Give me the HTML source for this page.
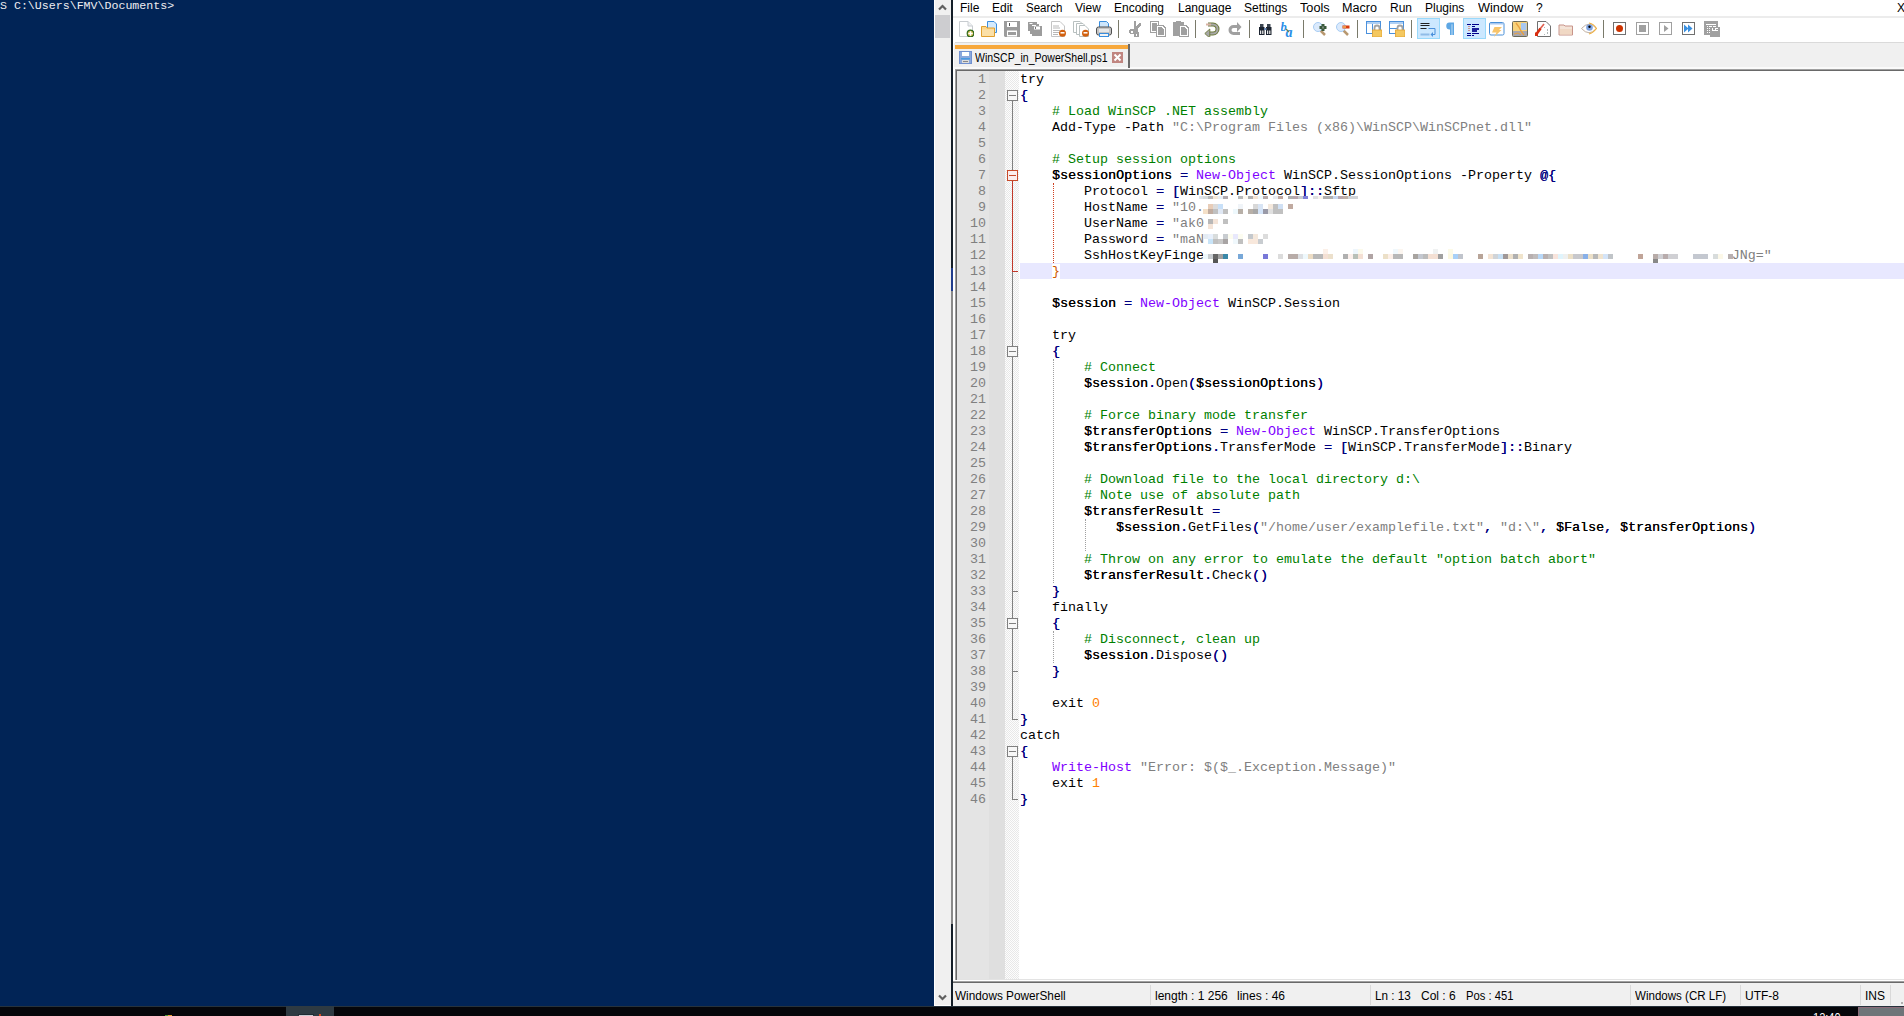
<!DOCTYPE html>
<html><head><meta charset="utf-8">
<style>
html,body{margin:0;padding:0;width:1904px;height:1016px;overflow:hidden;background:#012456;position:relative;font-family:"Liberation Sans",sans-serif}
.a{position:absolute}
#ps{position:absolute;left:0px;top:-1.5px;font-family:"Liberation Mono",monospace;font-size:11.62px;line-height:14px;color:#eeedf0;white-space:pre}
#pssb{position:absolute;left:934px;top:0;width:17px;height:1006px;background:#f0f0f0}
#npp{position:absolute;left:951px;top:0;width:953px;height:1006px;background:#fff}
.menu{position:absolute;top:1px;font-size:12px;color:#000;white-space:pre;line-height:15px}
#editor{position:absolute;left:955px;top:69px;width:949px;height:913px;background:#fff}
#code{position:absolute;left:1020px;top:72px;margin:0;font-family:"Liberation Mono",monospace;font-size:13.333px;line-height:16px;color:#000;white-space:pre}
#code b{font-weight:normal;text-shadow:0.35px 0 0 currentColor}
#code .v{color:#000}
#code .o{color:#000080;font-weight:normal}
#code .kb{color:#8000ff}
#code i{font-style:normal}
#code .c{color:#008000}
#code .s{color:#808080}
#code .k{color:#8000ff}
#code .n{color:#ff8000}
#code .bh{color:#d05a00;background:#fff}
#lineno{position:absolute;left:957px;top:72px;width:29px;margin:0;text-align:right;font-family:"Liberation Mono",monospace;font-size:13.333px;line-height:16px;color:#808080;white-space:pre}
.ig{position:absolute;width:0;border-left:1px dotted #a0a0a0}
.status{position:absolute;top:989px;font-size:12px;line-height:15px;color:#000;white-space:pre}
.ssep{position:absolute;top:985px;width:1px;height:20px;background:#d9d9d9}
.tb{position:absolute;top:21px;width:16px;height:16px}
.tsep{position:absolute;top:20px;width:1px;height:18px;background:#7a7a6a}
</style></head><body>
<div id="ps">S C:\Users\FMV\Documents&gt;</div>

<!-- powershell scrollbar -->
<div id="pssb">
  <div class="a" style="left:0;top:0;width:1px;height:1006px;background:#fff"></div><div class="a" style="left:0;top:1005px;width:17px;height:1px;background:#fff"></div><div class="a" style="left:1px;top:15px;width:15px;height:23px;background:#cdcdd0"></div>
  <svg class="a" style="left:4px;top:3px" width="9" height="8"><path d="M1 6.5 L4.5 3 L8 6.5" fill="none" stroke="#606060" stroke-width="2.2"/></svg>
  <svg class="a" style="left:4px;top:994px" width="9" height="8"><path d="M1 1.5 L4.5 5 L8 1.5" fill="none" stroke="#606060" stroke-width="2.2"/></svg>
</div>

<!-- notepad++ -->
<div id="npp">
  <div class="a" style="left:0;top:0;width:2px;height:1006px;background:linear-gradient(#141e28 0,#141e28 268px,#203c8c 268px,#203c8c 291px,#8a8a8a 291px,#8a8a8a 924px,#141e28 924px)"></div>
  <!-- menubar line -->
  <div class="a" style="left:2px;top:16px;width:951px;height:2px;background:#ececec"></div>
  <!-- toolbar/tabbar line -->
  <div class="a" style="left:4px;top:42px;width:949px;height:1px;background:#dadada"></div>
  <!-- tab bar bg -->
  <div class="a" style="left:3px;top:43px;width:950px;height:24px;background:#f0f0f0"></div>
  <div class="a" style="left:3px;top:67px;width:950px;height:2px;background:#fafafa"></div>
</div>

<svg class="a" style="left:958px;top:21px" width="16" height="16" viewBox="0 0 16 16"><path d="M1.5 0.5H10L14.5 5V15.5H1.5Z" fill="#fff" stroke="#c8ccd0"/><path d="M10 0.5V5H14.5" fill="#eef0f2" stroke="#c8ccd0"/><circle cx="12.5" cy="12.5" r="3.3" fill="#c8b040" stroke="#2e6a1e" stroke-width="1.2"/><path d="M12.5 10.3V14.7M10.3 12.5H14.7" stroke="#fff" stroke-width="1.5"/></svg>
<svg class="a" style="left:981px;top:21px" width="16" height="16" viewBox="0 0 16 16"><path d="M6.5 0.5H13L15.5 3V11.5H6.5Z" fill="#d4eafd" stroke="#3c8ede"/><path d="M0.5 5.5H5L6 7H13.5V15.5H0.5Z" fill="#fcd68a" stroke="#e0a030"/><rect x="1" y="8.5" width="12" height="6.5" fill="#fbe0a8"/></svg>
<svg class="a" style="left:1004px;top:21px" width="16" height="16" viewBox="0 0 16 16"><path d="M0 0H16V16H1L0 15Z" fill="#9c9c9c"/><rect x="3" y="1" width="10" height="5" fill="#fff"/><rect x="5" y="2" width="1" height="3" fill="#555"/><rect x="3" y="9.5" width="10" height="6" fill="#fff"/><rect x="4" y="11" width="8" height="3" fill="#9c9c9c"/></svg>
<svg class="a" style="left:1027px;top:21px" width="16" height="16" viewBox="0 0 16 16"><rect x="1" y="1" width="9" height="9" fill="#9c9c9c"/><rect x="3" y="3" width="9" height="10" fill="#9c9c9c"/><rect x="2.5" y="2" width="3" height="1" fill="#fff"/><rect x="5" y="4" width="4" height="1" fill="#fff"/><rect x="5" y="5" width="10" height="10" fill="#9c9c9c"/><rect x="7" y="5.5" width="6" height="3" fill="#fff"/><rect x="8" y="6" width="1" height="2" fill="#777"/></svg>
<svg class="a" style="left:1050px;top:21px" width="16" height="16" viewBox="0 0 16 16"><path d="M1.5 0.5H10L14.5 5V15.5H1.5Z" fill="#fff" stroke="#c4c4c4"/><path d="M3 5H9M3 7H10M3 9.5H10M3 11.5H9M3 13.5H8" stroke="#b8b8b8"/><circle cx="12.5" cy="12.3" r="3.5" fill="#d2600e"/><path d="M10.5 11.8H14.5" stroke="#fff" stroke-width="1.5"/></svg>
<svg class="a" style="left:1073px;top:21px" width="16" height="16" viewBox="0 0 16 16"><path d="M0.5 0.5H7L8.5 2V11.5H0.5Z" fill="#fff" stroke="#b8c0c0"/><path d="M3.5 2.5H10L11.5 4V13.5H3.5Z" fill="#fff" stroke="#b8c0c0"/><path d="M6.5 4.5H12L15.5 8V15.5H6.5Z" fill="#fff" stroke="#b8c0c0"/><circle cx="12.5" cy="12.3" r="3.5" fill="#d2600e"/><path d="M10.5 11.8H14.5" stroke="#fff" stroke-width="1.5"/></svg>
<svg class="a" style="left:1096px;top:21px" width="16" height="16" viewBox="0 0 16 16"><path d="M3.5 0.5H10.5L12.5 2.5V7H3.5Z" fill="#cde6fc" stroke="#3a8ede"/><rect x="0.5" y="6" width="15" height="8" rx="2" fill="#c4c4c4" stroke="#505050"/><rect x="3" y="8" width="10" height="3" fill="#e8e8e8"/><rect x="3.5" y="12.5" width="9" height="3" fill="#f4f4f4" stroke="#3a8ede"/></svg>
<svg class="a" style="left:1127px;top:21px" width="16" height="16" viewBox="0 0 16 16"><g shape-rendering="crispEdges"><rect x="7" y="0" width="2" height="10" fill="#a0a0a0"/><path d="M12 2H14V4L10 9H8V7Z" fill="#a0a0a0"/><rect x="3" y="8" width="8" height="5" fill="#a0a0a0"/><rect x="2" y="9" width="2" height="3" fill="#a0a0a0"/><rect x="4" y="10" width="2" height="2" fill="#fff"/><rect x="7" y="11" width="5" height="5" fill="#a0a0a0"/><rect x="9" y="13" width="1" height="2" fill="#fff"/></g></svg>
<svg class="a" style="left:1150px;top:21px" width="16" height="16" viewBox="0 0 16 16"><g shape-rendering="crispEdges"><rect x="0" y="0" width="9" height="12" fill="#a0a0a0"/><rect x="1" y="1" width="7" height="10" fill="#fff"/><path d="M2 2H6L7 3V10H2Z" fill="#a0a0a0"/><path d="M6 4H13L16 7V16H6Z" fill="#a0a0a0"/><path d="M7 5H12L15 8V15H7Z" fill="#fff"/><path d="M8 6H11L14 9V14H8Z" fill="#a0a0a0"/></g></svg>
<svg class="a" style="left:1173px;top:21px" width="16" height="16" viewBox="0 0 16 16"><g shape-rendering="crispEdges"><rect x="0" y="1" width="11" height="14" fill="#a0a0a0"/><rect x="3" y="0" width="5" height="2" fill="#a0a0a0"/><path d="M6 4H13L16 7V16H6Z" fill="#a0a0a0"/><path d="M7 5H12L15 8V15H7Z" fill="#fff"/><path d="M8 6H11L14 9V14H8Z" fill="#a0a0a0"/></g></svg>
<svg class="a" style="left:1204px;top:21px" width="16" height="16" viewBox="0 0 16 16"><path d="M4 3.5H9A4.5 4.5 0 0 1 9 12.5H5" fill="none" stroke="#6d7a3c" stroke-width="4"/><path d="M4 3.5H9A4.5 4.5 0 0 1 9 12.5H5" fill="none" stroke="#a8a8a8" stroke-width="2"/><path d="M0.8 12.5L5.8 8V17Z" fill="#a8a8a8" stroke="#6d7a3c" stroke-width="0.9"/><rect x="2" y="2.5" width="5" height="2" fill="#d8b4a4"/></svg>
<svg class="a" style="left:1227px;top:21px" width="16" height="16" viewBox="0 0 16 16"><path d="M14.5 6L10 1V4H6.5A5 5 0 0 0 6.5 14H13V11H6.5A2 2 0 0 1 6.5 7H10V11Z" fill="#a0a0a0"/></svg>
<svg class="a" style="left:1258px;top:21px" width="16" height="16" viewBox="0 0 16 16"><path d="M1 6H6.5V14H1Z M8 6H13.5V14H8Z" fill="#1c2430"/><path d="M2 3H5.5V6H2Z M9 3H12.5V6H9Z" fill="#3a4450"/><rect x="6" y="7" width="2.5" height="2" fill="#6a8ab8"/><rect x="2" y="9.5" width="1.2" height="3.5" fill="#e8e8e8"/><rect x="4" y="9.5" width="1.5" height="3.5" fill="#c8c8c8"/><rect x="9" y="9.5" width="1.2" height="3.5" fill="#e8e8e8"/><rect x="11" y="9.5" width="1.5" height="3.5" fill="#c8c8c8"/></svg>
<svg class="a" style="left:1281px;top:21px" width="16" height="16" viewBox="0 0 16 16"><text x="-0.5" y="9.5" font-family="Liberation Serif" font-style="italic" font-weight="bold" font-size="12.5" fill="#2a8ee8">b</text><text x="4.5" y="15.5" font-family="Liberation Serif" font-style="italic" font-weight="bold" font-size="14" fill="#2a8ee8">a</text><path d="M5 8L8 11" stroke="#6a8050" stroke-width="1.2"/></svg>
<svg class="a" style="left:1312px;top:21px" width="16" height="16" viewBox="0 0 16 16"><path d="M8.5 9.5L13 14" stroke="#b89870" stroke-width="2.5"/><circle cx="6" cy="6" r="4.5" fill="#dbeafc" stroke="#a8cdf4"/><path d="M9.5 3H12.5V5H14.5V8H12.5V10H9.5V8H7.5V5H9.5Z" fill="#3a5a3a"/><rect x="10.3" y="5.5" width="1.4" height="2" fill="#9a9a9a"/></svg>
<svg class="a" style="left:1335px;top:21px" width="16" height="16" viewBox="0 0 16 16"><path d="M8.5 9.5L13 14" stroke="#b89870" stroke-width="2.5"/><circle cx="6" cy="6" r="4.5" fill="#dbeafc" stroke="#a8cdf4"/><rect x="7.5" y="4.5" width="7" height="3" fill="#d83a10"/><rect x="8" y="5.3" width="3" height="1.4" fill="#f8c060"/></svg>
<svg class="a" style="left:1366px;top:21px" width="16" height="16" viewBox="0 0 16 16"><rect x="0.5" y="0.5" width="14" height="12" fill="#fff" stroke="#4a90dc"/><rect x="1" y="1" width="13" height="2" fill="#b0d0f4"/><path d="M6.5 3V12.5" stroke="#4a90dc"/><path d="M8.5 9V7A2.5 2.5 0 0 1 13.5 7V9" fill="none" stroke="#a4a4a4" stroke-width="1.8"/><rect x="6.5" y="9" width="9.5" height="7" fill="#f4c860" stroke="#e0a030" stroke-width="0.8"/></svg>
<svg class="a" style="left:1389px;top:21px" width="16" height="16" viewBox="0 0 16 16"><rect x="0.5" y="0.5" width="14" height="12" fill="#fff" stroke="#4a90dc"/><rect x="1" y="1" width="13" height="2" fill="#b0d0f4"/><path d="M1 7.5H8" stroke="#4a90dc"/><path d="M8.5 9V7A2.5 2.5 0 0 1 13.5 7V9" fill="none" stroke="#a4a4a4" stroke-width="1.8"/><rect x="6.5" y="9" width="9.5" height="7" fill="#f4c860" stroke="#e0a030" stroke-width="0.8"/></svg>
<div class="a" style="left:1417px;top:18px;width:21px;height:19px;border:1px solid #99d9fb;background:#cce8ff"></div>
<svg class="a" style="left:1420px;top:21px" width="16" height="16" viewBox="0 0 16 16"><rect x="0.5" y="2" width="9" height="1" fill="#222"/><rect x="0.5" y="4" width="9" height="1" fill="#222"/><rect x="0.5" y="7" width="6" height="1" fill="#222"/><path d="M8.5 7.5H15V13.5H12" fill="none" stroke="#4a90dc" stroke-width="1"/><path d="M13 11L10.5 13.5L13 16Z" fill="#4a90dc"/><rect x="0.5" y="12.5" width="9" height="2" fill="#90bce8"/></svg>
<svg class="a" style="left:1443px;top:21px" width="16" height="16" viewBox="0 0 16 16"><path d="M6.5 1.5H11V14H9.3V3.2H8.7V14H7V8.5A3.5 3.5 0 0 1 6.5 1.5Z" fill="#5ea7e4"/></svg>
<div class="a" style="left:1463px;top:18px;width:21px;height:19px;border:1px solid #99d9fb;background:#cce8ff"></div>
<svg class="a" style="left:1466px;top:21px" width="16" height="16" viewBox="0 0 16 16"><path d="M1 3.5H5M6 3.5H13M6 5.5H9M6 8H13M6 10H11M1 12.5H5M6 12.5H13M1 14.5H5M6 14.5H8M6.5 16.5H7.5" stroke="#00008a" stroke-width="1"/><rect x="6" y="7.3" width="7" height="1.4" fill="#00008a"/><rect x="6" y="9.3" width="5" height="1.4" fill="#00008a"/><path d="M3 5V11" stroke="#d04020" stroke-dasharray="1 1"/></svg>
<svg class="a" style="left:1489px;top:21px" width="16" height="16" viewBox="0 0 16 16"><rect x="0.5" y="1.5" width="14.5" height="12.5" rx="1.5" fill="#fff" stroke="#4a90d8"/><rect x="1" y="2" width="13.5" height="1.5" fill="#a8c8f0"/><path d="M5.5 6H13L10 9H12.5L5 16L7.5 11.5H3Z" fill="#f8c46a"/></svg>
<svg class="a" style="left:1512px;top:21px" width="16" height="16" viewBox="0 0 16 16"><rect x="0.5" y="0.5" width="15" height="15" rx="1" fill="#f8d27a" stroke="#6a6a5a"/><rect x="9" y="2" width="5.5" height="7" fill="#a8c8f0"/><rect x="1" y="10" width="14" height="5" fill="#a8a8b0"/><path d="M4 2L7 6L9 10L12 14" stroke="#e8a040" stroke-width="1.4" fill="none"/><path d="M2 13L6 12L9 14" stroke="#e8a040" stroke-width="1" fill="none"/></svg>
<svg class="a" style="left:1535px;top:21px" width="16" height="16" viewBox="0 0 16 16"><path d="M2.5 0.5H11L15.5 5V15.5H2.5Z" fill="#fff" stroke="#707070"/><path d="M9 3L5 8" stroke="#e06050" stroke-width="1.6"/><path d="M5.5 7.5L1.5 13" stroke="#d82e10" stroke-width="2.6"/><rect x="0" y="11.5" width="3" height="3.5" fill="#d82e10"/><rect x="9" y="6" width="1" height="1" fill="#b0b8b8"/><rect x="12" y="8" width="1" height="2" fill="#b0b8b8"/><rect x="12" y="11" width="1" height="2" fill="#b0b8b8"/><rect x="9" y="13" width="1" height="1" fill="#b0b8b8"/></svg>
<svg class="a" style="left:1558px;top:21px" width="16" height="16" viewBox="0 0 16 16"><path d="M1 4H6L7 5H14.5V14H1Z" fill="#f4e4d8" stroke="#c8948a"/><rect x="2" y="8" width="12" height="5.5" fill="#f0d8c4"/></svg>
<svg class="a" style="left:1581px;top:21px" width="16" height="16" viewBox="0 0 16 16"><path d="M0.5 7.5Q8 -1 15.5 7.5Q8 16 0.5 7.5Z" fill="#fff" stroke="#c0b0a0" stroke-width="1"/><path d="M8 2Q13 3 15.5 7.5Q12 12 8 13" fill="none" stroke="#f0b040" stroke-width="1.2"/><circle cx="8.5" cy="6.5" r="3.3" fill="#80a4e0"/><circle cx="8.5" cy="5.8" r="1.2" fill="#000"/></svg>
<svg class="a" style="left:1612px;top:21px" width="16" height="16" viewBox="0 0 16 16"><rect x="1.5" y="1.5" width="12" height="12" fill="#fff" stroke="#707070" stroke-width="1"/><circle cx="7.5" cy="7.5" r="3.5" fill="#cc3300"/></svg>
<svg class="a" style="left:1635px;top:21px" width="16" height="16" viewBox="0 0 16 16"><rect x="1.5" y="1.5" width="12" height="12" fill="#fff" stroke="#a0a0a0"/><rect x="4" y="4" width="7" height="7" fill="#a0a0a0"/></svg>
<svg class="a" style="left:1658px;top:21px" width="16" height="16" viewBox="0 0 16 16"><rect x="1.5" y="1.5" width="12" height="12" fill="#fff" stroke="#a0a0a0"/><path d="M6 4L10.5 7.5L6 11Z" fill="#a0a0a0"/></svg>
<svg class="a" style="left:1681px;top:21px" width="16" height="16" viewBox="0 0 16 16"><rect x="1.5" y="1.5" width="12" height="12" fill="#fff" stroke="#707070"/><path d="M3 3.5L7.5 7.5L3 11.5Z M7 3.5L11.5 7.5L7 11.5Z" fill="#3a90e0"/></svg>
<svg class="a" style="left:1704px;top:21px" width="16" height="16" viewBox="0 0 16 16"><g shape-rendering="crispEdges" fill="#fff"><rect x="0" y="0" width="14" height="14" fill="#a0a0a0"/><rect x="6" y="6" width="10" height="10" fill="#a0a0a0"/><rect x="2" y="3" width="10" height="1"/><rect x="3" y="5" width="1" height="1"/><rect x="5" y="5" width="3" height="1"/><rect x="9" y="5" width="3" height="1"/><rect x="3" y="7" width="1" height="1"/><rect x="5" y="7" width="1" height="1"/><rect x="3" y="9" width="1" height="1"/><rect x="5" y="9" width="1" height="1"/><rect x="3" y="11" width="1" height="1"/><rect x="5" y="11" width="1" height="1"/><rect x="8" y="7" width="1" height="3"/><rect x="8" y="9" width="6" height="1"/><rect x="11" y="7" width="3" height="1"/><rect x="11" y="7" width="1" height="3"/></g></svg>
<div class="tsep" style="left:1118px"></div>
<div class="tsep" style="left:1195px"></div>
<div class="tsep" style="left:1249px"></div>
<div class="tsep" style="left:1303px"></div>
<div class="tsep" style="left:1357px"></div>
<div class="tsep" style="left:1411px"></div>
<div class="tsep" style="left:1603px"></div>
<!-- menus -->
<div class="menu" style="left:960px">File</div>
<div class="menu" style="left:992px">Edit</div>
<div class="menu" style="left:1026px;transform:scaleX(0.96);transform-origin:0 0">Search</div>
<div class="menu" style="left:1075px">View</div>
<div class="menu" style="left:1114px">Encoding</div>
<div class="menu" style="left:1178px">Language</div>
<div class="menu" style="left:1244px">Settings</div>
<div class="menu" style="left:1300px;transform:scaleX(1.06);transform-origin:0 0">Tools</div>
<div class="menu" style="left:1342px;transform:scaleX(1.05);transform-origin:0 0">Macro</div>
<div class="menu" style="left:1390px">Run</div>
<div class="menu" style="left:1425px">Plugins</div>
<div class="menu" style="left:1478px;transform:scaleX(1.06);transform-origin:0 0">Window</div>
<div class="menu" style="left:1536px">?</div>
<div class="menu" style="left:1897px">X</div>

<!-- tab -->
<div class="a" style="left:955px;top:45px;width:173px;height:4px;background:#f7a83c"></div>
<div class="a" style="left:955px;top:49px;width:173px;height:18px;background:#f0f0f0"></div>
<div class="a" style="left:1128px;top:44px;width:2px;height:24px;background:#6a6a6a"></div>
<div class="a" style="left:975px;top:51px;font-size:12px;line-height:15px;white-space:pre;transform:scaleX(0.875);transform-origin:0 0">WinSCP_in_PowerShell.ps1</div>
<svg class="a" style="left:959px;top:51px" width="13" height="13"><rect x="0.5" y="0.5" width="12" height="12" fill="#8aa8dc" stroke="#7090d0"/><rect x="3" y="1" width="7" height="4" fill="#fff"/><rect x="2" y="7" width="9" height="1.5" fill="#4a9ae0"/><rect x="3" y="9" width="7" height="3" fill="#ddd"/><rect x="4" y="10" width="5" height="1" fill="#888"/></svg>
<svg class="a" style="left:1112px;top:52px" width="11" height="11"><rect x="0" y="0" width="11" height="11" fill="#c08580"/><path d="M2.5 2.5 L8.5 8.5 M8.5 2.5 L2.5 8.5" stroke="#fff" stroke-width="2"/></svg>

<!-- editor -->
<div class="a" style="left:955px;top:69px;width:949px;height:1px;background:#a0a0a0"></div>
<div class="a" style="left:955px;top:70px;width:949px;height:1px;background:#696969"></div>
<div class="a" style="left:955px;top:69px;width:1px;height:913px;background:#a0a0a0"></div>
<div class="a" style="left:956px;top:70px;width:1px;height:911px;background:#696969"></div>
<div class="a" style="left:957px;top:71px;width:947px;height:909px;background:#fff"></div>
<div class="a" style="left:957px;top:979px;width:947px;height:1px;background:#e3e3e3"></div>
<div class="a" style="left:955px;top:980px;width:949px;height:1px;background:#fff"></div>
<div class="a" style="left:953px;top:981px;width:951px;height:1px;background:#a0a0a0"></div>
<div class="a" style="left:953px;top:982px;width:951px;height:1px;background:#696969"></div>
<!-- margins -->
<div class="a" style="left:957px;top:71px;width:32px;height:908px;background:#e4e4e4"></div>
<div class="a" style="left:989px;top:71px;width:16px;height:908px;background:#dfdfdf"></div>
<div class="a" style="left:1005px;top:71px;width:14px;height:908px;background:repeating-conic-gradient(#e8e8e8 0 25%,#fdfdfd 0 50%) 0 1px/2px 2px"></div>
<!-- current line -->
<div class="a" style="left:1020px;top:263px;width:884px;height:16px;background:#e8e8ff"></div>

<pre id="lineno">1
2
3
4
5
6
7
8
9
10
11
12
13
14
15
16
17
18
19
20
21
22
23
24
25
26
27
28
29
30
31
32
33
34
35
36
37
38
39
40
41
42
43
44
45
46</pre>
<div style="position:absolute;left:1012px;top:100px;width:1px;height:619px;background:#808080"></div>
<div style="position:absolute;left:1012px;top:719px;width:6px;height:1px;background:#808080"></div>
<div style="position:absolute;left:1012px;top:180px;width:1px;height:91px;background:#c0392b"></div>
<div style="position:absolute;left:1012px;top:271px;width:6px;height:1px;background:#c0392b"></div>
<div style="position:absolute;left:1012px;top:591px;width:6px;height:1px;background:#808080"></div>
<div style="position:absolute;left:1012px;top:671px;width:6px;height:1px;background:#808080"></div>
<div style="position:absolute;left:1012px;top:756px;width:1px;height:43px;background:#808080"></div>
<div style="position:absolute;left:1012px;top:799px;width:6px;height:1px;background:#808080"></div>
<div style="position:absolute;left:1007px;top:90px;width:9px;height:9px;border:1px solid #808080;background:#f7f7f7"><div style="position:absolute;left:1px;top:4px;width:7px;height:1px;background:#808080"></div></div>
<div style="position:absolute;left:1007px;top:170px;width:9px;height:9px;border:1px solid #c84a2a;background:#fbeeee"><div style="position:absolute;left:1px;top:4px;width:7px;height:1px;background:#c84a2a"></div></div>
<div style="position:absolute;left:1007px;top:346px;width:9px;height:9px;border:1px solid #808080;background:#f7f7f7"><div style="position:absolute;left:1px;top:4px;width:7px;height:1px;background:#808080"></div></div>
<div style="position:absolute;left:1007px;top:618px;width:9px;height:9px;border:1px solid #808080;background:#f7f7f7"><div style="position:absolute;left:1px;top:4px;width:7px;height:1px;background:#808080"></div></div>
<div style="position:absolute;left:1007px;top:746px;width:9px;height:9px;border:1px solid #808080;background:#f7f7f7"><div style="position:absolute;left:1px;top:4px;width:7px;height:1px;background:#808080"></div></div>
<div class="ig" style="left:1053px;top:183px;height:80px;border-left-color:#d04020"></div>
<div class="ig" style="left:1053px;top:359px;height:224px;border-left-color:#a0a0a0"></div>
<div class="ig" style="left:1085px;top:519px;height:32px;border-left-color:#a0a0a0"></div>
<div class="ig" style="left:1053px;top:631px;height:32px;border-left-color:#a0a0a0"></div>
<pre id="code">try
<b class="o">{</b>
    <i class="c"># Load WinSCP .NET assembly</i>
    Add-Type -Path <i class="s">&quot;C:\Program Files (x86)\WinSCP\WinSCPnet.dll&quot;</i>

    <i class="c"># Setup session options</i>
    <b class="v">$sessionOptions</b> <b class="o">=</b> <i class="k">New-Object</i> WinSCP.SessionOptions -Property <b class="o">@{</b>
        Protocol <b class="o">=</b> <b class="o">[</b>WinSCP.Protocol<b class="o">]::</b>Sftp
        HostName <b class="o">=</b> <i class="s">&quot;10.</i>
        UserName <b class="o">=</b> <i class="s">&quot;ak0</i>
        Password <b class="o">=</b> <i class="s">&quot;maN</i>
        SshHostKeyFinge                                                                  <i class="s">JNg=&quot;</i>
    <i class="bh">}</i>

    <b class="v">$session</b> <b class="o">=</b> <i class="k">New-Object</i> WinSCP.Session

    try
    <b class="o">{</b>
        <i class="c"># Connect</i>
        <b class="v">$session</b><b class="o">.</b>Open<b class="o">(</b><b class="v">$sessionOptions</b><b class="o">)</b>

        <i class="c"># Force binary mode transfer</i>
        <b class="v">$transferOptions</b> <b class="o">=</b> <i class="k">New-Object</i> WinSCP.TransferOptions
        <b class="v">$transferOptions</b><b class="o">.</b>TransferMode <b class="o">=</b> <b class="o">[</b>WinSCP.TransferMode<b class="o">]::</b>Binary

        <i class="c"># Download file to the local directory d:\</i>
        <i class="c"># Note use of absolute path</i>
        <b class="v">$transferResult</b> <b class="o">=</b>
            <b class="v">$session</b><b class="o">.</b>GetFiles<b class="o">(</b><i class="s">&quot;/home/user/examplefile.txt&quot;</i><b class="o">,</b> <i class="s">&quot;d:\&quot;</i><b class="o">,</b> <b class="v">$False</b><b class="o">,</b> <b class="v">$transferOptions</b><b class="o">)</b>

        <i class="c"># Throw on any error to emulate the default &quot;option batch abort&quot;</i>
        <b class="v">$transferResult</b><b class="o">.</b>Check<b class="o">()</b>
    <b class="o">}</b>
    finally
    <b class="o">{</b>
        <i class="c"># Disconnect, clean up</i>
        <b class="v">$session</b><b class="o">.</b>Dispose<b class="o">()</b>
    <b class="o">}</b>

    exit <i class="n">0</i>
<b class="o">}</b>
catch
<b class="o">{</b>
    <i class="k">Write-Host</i> <i class="s">&quot;Error: $($_.Exception.Message)&quot;</i>
    exit <i class="n">1</i>
<b class="o">}</b></pre>
<div class="a" style="left:1199px;top:196px;width:5px;height:3px;background:#e0e4e8"></div>
<div class="a" style="left:1203px;top:196px;width:5px;height:3px;background:#d8dcdc"></div>
<div class="a" style="left:1208px;top:196px;width:5px;height:3px;background:#b8b8b8"></div>
<div class="a" style="left:1213px;top:196px;width:5px;height:3px;background:#f4e8d8"></div>
<div class="a" style="left:1218px;top:196px;width:5px;height:3px;background:#e8f0f8"></div>
<div class="a" style="left:1223px;top:196px;width:5px;height:3px;background:#b0aab0"></div>
<div class="a" style="left:1238px;top:196px;width:5px;height:3px;background:#b8b8b8"></div>
<div class="a" style="left:1243px;top:196px;width:5px;height:3px;background:#fcf8f0"></div>
<div class="a" style="left:1248px;top:196px;width:5px;height:3px;background:#b0b0b0"></div>
<div class="a" style="left:1253px;top:196px;width:5px;height:3px;background:#f4e4d4"></div>
<div class="a" style="left:1258px;top:196px;width:5px;height:3px;background:#eef8fc"></div>
<div class="a" style="left:1263px;top:196px;width:5px;height:3px;background:#b8a8a8"></div>
<div class="a" style="left:1273px;top:196px;width:5px;height:3px;background:#e8ecf0"></div>
<div class="a" style="left:1278px;top:196px;width:5px;height:3px;background:#c0a8a0"></div>
<div class="a" style="left:1288px;top:196px;width:5px;height:3px;background:#b0b0b0"></div>
<div class="a" style="left:1293px;top:196px;width:5px;height:3px;background:#b8a8b0"></div>
<div class="a" style="left:1298px;top:196px;width:5px;height:3px;background:#c8ccd0"></div>
<div class="a" style="left:1303px;top:196px;width:5px;height:3px;background:#8080d8"></div>
<div class="a" style="left:1313px;top:196px;width:5px;height:3px;background:#e0e0e0"></div>
<div class="a" style="left:1318px;top:196px;width:5px;height:3px;background:#f8f4ec"></div>
<div class="a" style="left:1323px;top:196px;width:10px;height:3px;background:#b0b0b0"></div>
<div class="a" style="left:1333px;top:196px;width:5px;height:3px;background:#c8d8f0"></div>
<div class="a" style="left:1338px;top:196px;width:5px;height:3px;background:#b8a8b0"></div>
<div class="a" style="left:1343px;top:196px;width:5px;height:3px;background:#c0b0a8"></div>
<div class="a" style="left:1348px;top:196px;width:10px;height:3px;background:#d0d4d8"></div>
<div class="a" style="left:1208px;top:204px;width:5px;height:5px;background:#e8cdb8"></div>
<div class="a" style="left:1213px;top:204px;width:5px;height:5px;background:#dcdcdc"></div>
<div class="a" style="left:1218px;top:204px;width:5px;height:5px;background:#c8e0f8"></div>
<div class="a" style="left:1238px;top:204px;width:5px;height:5px;background:#f0f4f8"></div>
<div class="a" style="left:1253px;top:204px;width:5px;height:5px;background:#d8d8d8"></div>
<div class="a" style="left:1258px;top:204px;width:5px;height:5px;background:#d8e4f4"></div>
<div class="a" style="left:1268px;top:204px;width:5px;height:5px;background:#f4e8dc"></div>
<div class="a" style="left:1273px;top:204px;width:5px;height:5px;background:#c0c0c0"></div>
<div class="a" style="left:1278px;top:204px;width:5px;height:5px;background:#d0e0f4"></div>
<div class="a" style="left:1288px;top:204px;width:5px;height:5px;background:#c0aaa0"></div>
<div class="a" style="left:1203px;top:209px;width:5px;height:5px;background:#f4e0c8"></div>
<div class="a" style="left:1208px;top:209px;width:5px;height:5px;background:#c0aca0"></div>
<div class="a" style="left:1213px;top:209px;width:5px;height:5px;background:#c0c0c0"></div>
<div class="a" style="left:1218px;top:209px;width:5px;height:5px;background:#e0e8f4"></div>
<div class="a" style="left:1223px;top:209px;width:5px;height:5px;background:#c0c0c0"></div>
<div class="a" style="left:1233px;top:209px;width:5px;height:5px;background:#eef8fc"></div>
<div class="a" style="left:1238px;top:209px;width:5px;height:5px;background:#b8b0a8"></div>
<div class="a" style="left:1248px;top:209px;width:5px;height:5px;background:#b8b0a8"></div>
<div class="a" style="left:1253px;top:209px;width:5px;height:5px;background:#a8a8a8"></div>
<div class="a" style="left:1258px;top:209px;width:5px;height:5px;background:#d4e4f8"></div>
<div class="a" style="left:1263px;top:209px;width:5px;height:5px;background:#9a9aa8"></div>
<div class="a" style="left:1268px;top:209px;width:5px;height:5px;background:#e0e0e0"></div>
<div class="a" style="left:1273px;top:209px;width:5px;height:5px;background:#c0c0c0"></div>
<div class="a" style="left:1278px;top:209px;width:5px;height:5px;background:#c0c0c0"></div>
<div class="a" style="left:1208px;top:219px;width:5px;height:5px;background:#b8b8b8"></div>
<div class="a" style="left:1213px;top:219px;width:5px;height:5px;background:#f4e4d8"></div>
<div class="a" style="left:1223px;top:219px;width:5px;height:5px;background:#c0c0c0"></div>
<div class="a" style="left:1208px;top:224px;width:5px;height:5px;background:#f4e4d8"></div>
<div class="a" style="left:1203px;top:234px;width:5px;height:5px;background:#e4ecf4"></div>
<div class="a" style="left:1208px;top:234px;width:5px;height:5px;background:#e8f0fc"></div>
<div class="a" style="left:1213px;top:234px;width:5px;height:5px;background:#d8dcdc"></div>
<div class="a" style="left:1223px;top:234px;width:5px;height:5px;background:#c8ccd0"></div>
<div class="a" style="left:1228px;top:234px;width:5px;height:5px;background:#fcfcf0"></div>
<div class="a" style="left:1233px;top:234px;width:5px;height:5px;background:#e8e8fc"></div>
<div class="a" style="left:1238px;top:234px;width:5px;height:5px;background:#fcfcf0"></div>
<div class="a" style="left:1248px;top:234px;width:5px;height:5px;background:#c4c8cc"></div>
<div class="a" style="left:1253px;top:234px;width:5px;height:5px;background:#f4e8dc"></div>
<div class="a" style="left:1263px;top:234px;width:5px;height:5px;background:#dcdcdc"></div>
<div class="a" style="left:1208px;top:239px;width:5px;height:5px;background:#c8e4f8"></div>
<div class="a" style="left:1213px;top:239px;width:5px;height:5px;background:#c0c0c0"></div>
<div class="a" style="left:1218px;top:239px;width:5px;height:5px;background:#c8c8c8"></div>
<div class="a" style="left:1223px;top:239px;width:5px;height:5px;background:#a8a4a4"></div>
<div class="a" style="left:1233px;top:239px;width:5px;height:5px;background:#f0f8fc"></div>
<div class="a" style="left:1238px;top:239px;width:5px;height:5px;background:#c0c0c0"></div>
<div class="a" style="left:1248px;top:239px;width:5px;height:5px;background:#f8e8dc"></div>
<div class="a" style="left:1253px;top:239px;width:5px;height:5px;background:#f8e8dc"></div>
<div class="a" style="left:1258px;top:239px;width:5px;height:5px;background:#c8ccd0"></div>
<div class="a" style="left:1203px;top:254px;width:5px;height:5px;background:#eef8fc"></div>
<div class="a" style="left:1208px;top:254px;width:5px;height:5px;background:#c8ccd0"></div>
<div class="a" style="left:1213px;top:254px;width:5px;height:5px;background:#666666"></div>
<div class="a" style="left:1218px;top:254px;width:5px;height:5px;background:#a0a0a0"></div>
<div class="a" style="left:1223px;top:254px;width:5px;height:5px;background:#3a88a8"></div>
<div class="a" style="left:1238px;top:254px;width:5px;height:5px;background:#78a8d8"></div>
<div class="a" style="left:1263px;top:254px;width:5px;height:5px;background:#7878d8"></div>
<div class="a" style="left:1278px;top:254px;width:5px;height:5px;background:#dcdcdc"></div>
<div class="a" style="left:1288px;top:254px;width:10px;height:5px;background:#b8aca8"></div>
<div class="a" style="left:1298px;top:254px;width:5px;height:5px;background:#dde0e4"></div>
<div class="a" style="left:1303px;top:254px;width:5px;height:5px;background:#eef8fc"></div>
<div class="a" style="left:1308px;top:254px;width:5px;height:5px;background:#ecdcc4"></div>
<div class="a" style="left:1313px;top:254px;width:10px;height:5px;background:#b8b8b8"></div>
<div class="a" style="left:1323px;top:254px;width:5px;height:5px;background:#f4e0d4"></div>
<div class="a" style="left:1328px;top:254px;width:5px;height:5px;background:#ece0cc"></div>
<div class="a" style="left:1343px;top:254px;width:5px;height:5px;background:#b0b0b0"></div>
<div class="a" style="left:1348px;top:254px;width:5px;height:5px;background:#fcf0ec"></div>
<div class="a" style="left:1353px;top:254px;width:5px;height:5px;background:#b8c0b8"></div>
<div class="a" style="left:1358px;top:254px;width:5px;height:5px;background:#f4e0d4"></div>
<div class="a" style="left:1368px;top:254px;width:5px;height:5px;background:#b0a4a4"></div>
<div class="a" style="left:1383px;top:254px;width:5px;height:5px;background:#ece0c8"></div>
<div class="a" style="left:1388px;top:254px;width:5px;height:5px;background:#fcefe8"></div>
<div class="a" style="left:1393px;top:254px;width:10px;height:5px;background:#b8b8b8"></div>
<div class="a" style="left:1413px;top:254px;width:5px;height:5px;background:#a8a4a0"></div>
<div class="a" style="left:1418px;top:254px;width:5px;height:5px;background:#c4c8d0"></div>
<div class="a" style="left:1423px;top:254px;width:5px;height:5px;background:#bcbcbc"></div>
<div class="a" style="left:1428px;top:254px;width:10px;height:5px;background:#f4e0d4"></div>
<div class="a" style="left:1438px;top:254px;width:5px;height:5px;background:#a0a0a0"></div>
<div class="a" style="left:1448px;top:254px;width:5px;height:5px;background:#fcf8e0"></div>
<div class="a" style="left:1453px;top:254px;width:5px;height:5px;background:#a8d0f8"></div>
<div class="a" style="left:1458px;top:254px;width:5px;height:5px;background:#c0c4cc"></div>
<div class="a" style="left:1478px;top:254px;width:5px;height:5px;background:#b8a498"></div>
<div class="a" style="left:1488px;top:254px;width:5px;height:5px;background:#f4e4d4"></div>
<div class="a" style="left:1493px;top:254px;width:5px;height:5px;background:#d0d4d8"></div>
<div class="a" style="left:1498px;top:254px;width:5px;height:5px;background:#c8e0f4"></div>
<div class="a" style="left:1503px;top:254px;width:5px;height:5px;background:#a09898"></div>
<div class="a" style="left:1508px;top:254px;width:5px;height:5px;background:#ece0cc"></div>
<div class="a" style="left:1513px;top:254px;width:5px;height:5px;background:#b0b0b0"></div>
<div class="a" style="left:1518px;top:254px;width:5px;height:5px;background:#f0e4cc"></div>
<div class="a" style="left:1528px;top:254px;width:5px;height:5px;background:#b8b0b0"></div>
<div class="a" style="left:1533px;top:254px;width:5px;height:5px;background:#c0bcbc"></div>
<div class="a" style="left:1538px;top:254px;width:5px;height:5px;background:#b8d8f8"></div>
<div class="a" style="left:1543px;top:254px;width:5px;height:5px;background:#b8b0b0"></div>
<div class="a" style="left:1548px;top:254px;width:5px;height:5px;background:#c0c0c0"></div>
<div class="a" style="left:1553px;top:254px;width:5px;height:5px;background:#f8e4dc"></div>
<div class="a" style="left:1558px;top:254px;width:5px;height:5px;background:#e0f4fc"></div>
<div class="a" style="left:1563px;top:254px;width:5px;height:5px;background:#eef0f0"></div>
<div class="a" style="left:1568px;top:254px;width:5px;height:5px;background:#ece0c8"></div>
<div class="a" style="left:1573px;top:254px;width:10px;height:5px;background:#c8c8cc"></div>
<div class="a" style="left:1583px;top:254px;width:5px;height:5px;background:#88b0e8"></div>
<div class="a" style="left:1588px;top:254px;width:5px;height:5px;background:#ece0c8"></div>
<div class="a" style="left:1593px;top:254px;width:5px;height:5px;background:#b8b8b8"></div>
<div class="a" style="left:1598px;top:254px;width:5px;height:5px;background:#f0e4d0"></div>
<div class="a" style="left:1603px;top:254px;width:5px;height:5px;background:#d4e4f8"></div>
<div class="a" style="left:1608px;top:254px;width:5px;height:5px;background:#c0c4c8"></div>
<div class="a" style="left:1638px;top:254px;width:5px;height:5px;background:#c0a498"></div>
<div class="a" style="left:1653px;top:254px;width:5px;height:5px;background:#b8aca8"></div>
<div class="a" style="left:1658px;top:254px;width:5px;height:5px;background:#d0d0d4"></div>
<div class="a" style="left:1663px;top:254px;width:5px;height:5px;background:#b8acac"></div>
<div class="a" style="left:1668px;top:254px;width:10px;height:5px;background:#d0d0d4"></div>
<div class="a" style="left:1693px;top:254px;width:15px;height:5px;background:#c4c8d0"></div>
<div class="a" style="left:1713px;top:254px;width:5px;height:5px;background:#d8dcdc"></div>
<div class="a" style="left:1718px;top:254px;width:5px;height:5px;background:#fcf8e8"></div>
<div class="a" style="left:1728px;top:254px;width:5px;height:5px;background:#b8b0b0"></div>
<div class="a" style="left:1213px;top:259px;width:5px;height:4px;background:#555555"></div>
<div class="a" style="left:1653px;top:259px;width:5px;height:4px;background:#888888"></div>
<div class="a" style="left:1323px;top:249px;width:5px;height:5px;background:#fcf0e8"></div>
<div class="a" style="left:1353px;top:249px;width:5px;height:5px;background:#eef6fc"></div>
<div class="a" style="left:1358px;top:249px;width:5px;height:5px;background:#fcfaec"></div>
<div class="a" style="left:1393px;top:249px;width:5px;height:5px;background:#f0f8fc"></div>
<div class="a" style="left:1398px;top:249px;width:5px;height:5px;background:#fcf6f0"></div>
<div class="a" style="left:1433px;top:249px;width:5px;height:5px;background:#f0f2f2"></div>
<div class="a" style="left:1448px;top:249px;width:5px;height:5px;background:#fcfae8"></div>

<!-- status bar -->
<div class="a" style="left:953px;top:983px;width:951px;height:23px;background:#f0f0f0"></div>
<div class="status" style="left:955px;transform:scaleX(0.982);transform-origin:0 0">Windows PowerShell</div>
<div class="ssep" style="left:1150px"></div>
<div class="status" style="left:1155px">length : 1 256</div>
<div class="status" style="left:1237px">lines : 46</div>
<div class="ssep" style="left:1370px"></div>
<div class="status" style="left:1375px;transform:scaleX(0.975);transform-origin:0 0">Ln : 13</div>
<div class="status" style="left:1421px">Col : 6</div>
<div class="status" style="left:1466px;transform:scaleX(0.935);transform-origin:0 0">Pos : 451</div>
<div class="ssep" style="left:1630px"></div>
<div class="status" style="left:1635px;transform:scaleX(0.962);transform-origin:0 0">Windows (CR LF)</div>
<div class="ssep" style="left:1740px"></div>
<div class="status" style="left:1745px">UTF-8</div>
<div class="ssep" style="left:1860px"></div>
<div class="status" style="left:1865px">INS</div>
<div class="ssep" style="left:1890px"></div>

<!-- taskbar -->
<div class="a" style="left:0;top:1006px;width:1904px;height:1px;background:#26323c"></div>
<div class="a" style="left:0;top:1007px;width:1904px;height:9px;background:#05060a"></div>
<div class="a" style="left:286px;top:1006px;width:48px;height:10px;background:#2e3a42"></div>
<div class="a" style="left:299px;top:1015px;width:14px;height:1px;background:#c8c8d0"></div><div class="a" style="left:298px;top:1014px;width:16px;height:1px;background:#1e2a32"></div>
<div class="a" style="left:1858px;top:1007px;width:46px;height:9px;background:#6e7478;border-left:1px solid #8a6a78;border-top:1px solid #8a6a78;box-sizing:border-box"></div>
<div class="a" style="left:1813px;top:1011px;transform:scaleX(0.92);transform-origin:0 0;font-size:12px;line-height:15px;color:#fff;white-space:pre">12:40</div>
<div class="a" style="left:165px;top:1015px;width:3px;height:1px;background:#4a9a3a"></div>
<div class="a" style="left:168px;top:1015px;width:4px;height:1px;background:#e8a030"></div>
<div class="a" style="left:319px;top:1014px;width:2px;height:2px;background:#d84a20"></div>
<div class="a" style="left:1901px;top:1002px;width:2px;height:2px;background:#b0b0b0"></div>
</body></html>
